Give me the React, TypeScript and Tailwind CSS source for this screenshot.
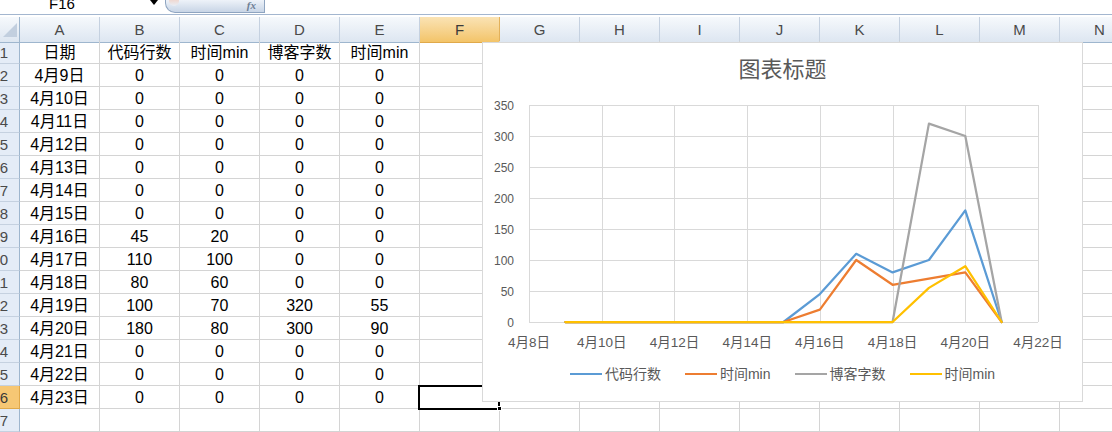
import React from 'react';

const font = { fontFamily: '"Liberation Sans", "Noto Sans CJK SC", sans-serif' };

const columns = ['A', 'B', 'C', 'D', 'E', 'F', 'G', 'H', 'I', 'J', 'K', 'L', 'M', 'N'];

const sheet: string[][] = [
  ['日期', '代码行数', '时间min', '博客字数', '时间min'],
  ['4月9日', '0', '0', '0', '0'],
  ['4月10日', '0', '0', '0', '0'],
  ['4月11日', '0', '0', '0', '0'],
  ['4月12日', '0', '0', '0', '0'],
  ['4月13日', '0', '0', '0', '0'],
  ['4月14日', '0', '0', '0', '0'],
  ['4月15日', '0', '0', '0', '0'],
  ['4月16日', '45', '20', '0', '0'],
  ['4月17日', '110', '100', '0', '0'],
  ['4月18日', '80', '60', '0', '0'],
  ['4月19日', '100', '70', '320', '55'],
  ['4月20日', '180', '80', '300', '90'],
  ['4月21日', '0', '0', '0', '0'],
  ['4月22日', '0', '0', '0', '0'],
  ['4月23日', '0', '0', '0', '0'],
  ['', '', '', '', ''],
];

// chart series, values for 4/9 .. 4/21
const series = [
  { name: '代码行数', color: '#5b9bd5', values: [0, 0, 0, 0, 0, 0, 0, 45, 110, 80, 100, 180, 0] },
  { name: '时间min', color: '#ed7d31', values: [0, 0, 0, 0, 0, 0, 0, 20, 100, 60, 70, 80, 0] },
  { name: '博客字数', color: '#a5a5a5', values: [0, 0, 0, 0, 0, 0, 0, 0, 0, 0, 320, 300, 0] },
  { name: '时间min', color: '#ffc000', values: [0, 0, 0, 0, 0, 0, 0, 0, 0, 0, 55, 90, 0] },
];

const plotLeft = 46;
const plotRight = 555;
const plotTop = 21;
const plotBottom = 238;
const dayW = (plotRight - plotLeft) / 14;
const xOf = (day: number) => plotLeft + (day - 8) * dayW;
const yOf = (v: number) => plotBottom - (v * (plotBottom - plotTop)) / 350;

const Chart: React.FC = () => (
  <div
    className="absolute left-[482px] top-[42px] w-[601px] h-[360px] bg-white border border-[#d9d9d9] z-20 flex flex-col"
    style={font}
  >
    <div className="mt-[13px] h-[28px] leading-[28px] text-center text-[22px] text-[#595959]">图表标题</div>
    <svg width="599" height="280" className="block">
      {[0, 50, 100, 150, 200, 250, 300, 350].map((v) => (
        <g key={v}>
          <line x1={plotLeft} x2={plotRight} y1={yOf(v) + 0.5} y2={yOf(v) + 0.5} stroke="#d9d9d9" strokeWidth="1" />
          <text x="31" y={yOf(v) + 1} textAnchor="end" dominantBaseline="central" fontSize="12" fill="#595959">
            {v}
          </text>
        </g>
      ))}
      {[8, 10, 12, 14, 16, 18, 20, 22].map((d) => (
        <g key={d}>
          <line x1={Math.round(xOf(d)) + 0.5} x2={Math.round(xOf(d)) + 0.5} y1={plotTop} y2={plotBottom} stroke="#d9d9d9" strokeWidth="1" />
          <text x={xOf(d)} y="258" textAnchor="middle" dominantBaseline="central" fontSize="13.5" fill="#595959">
            {`4月${d}日`}
          </text>
        </g>
      ))}
      {series.map((s, i) => (
        <polyline
          key={i}
          fill="none"
          stroke={s.color}
          strokeWidth="2.25"
          strokeLinejoin="round"
          strokeLinecap="round"
          points={s.values.map((v, k) => `${xOf(9 + k)},${yOf(v)}`).join(' ')}
        />
      ))}
    </svg>
    <div className="h-[20px] flex items-center justify-center gap-[24px] text-[14px] text-[#595959]">
      {series.map((s, i) => (
        <div key={i} className="flex items-center gap-[3px]">
          <span className="block w-[32px] h-[2px]" style={{ backgroundColor: s.color }} />
          <span className="leading-[20px]">{s.name}</span>
        </div>
      ))}
    </div>
  </div>
);

const App: React.FC = () => {
  return (
    <div className="relative w-[1112px] h-[432px] overflow-hidden bg-white" style={font}>
      {/* formula bar */}
      <div className="h-[15px] flex items-start border-b border-[#a3b6cf] overflow-hidden">
        <div className="w-[165px] h-[14px] flex items-start">
          <span className="ml-[49px] -mt-[6px] leading-[20px] text-[15px] text-black">F16</span>
          <svg width="8" height="5" className="ml-auto mr-[7px]">
            <polygon points="0,0 8,0 4,5" fill="#000" />
          </svg>
        </div>
        <div className="w-[100px] h-[13px] flex items-start rounded-bl-[10px] border border-t-0 border-[#8ea4c0] bg-gradient-to-b from-[#eef3f9] to-[#c8d5e6]">
          <span className="ml-[3px] -mt-[4px] w-[10px] h-[10px] rounded-full bg-gradient-to-b from-[#f3c9b8] to-[#e8eef6]" />
          <span
            className="ml-auto mr-[8px] -mt-[3px] text-[11px] italic font-bold text-[#6e7f96]"
            style={{ fontFamily: '"Liberation Serif", serif' }}
          >
            fx
          </span>
        </div>
      </div>
      <div className="h-[2px]" />

      {/* column headers */}
      <div className="grid grid-cols-[20px_repeat(14,80px)] h-[24px]">
        <div className="relative border-r border-b border-[#9eb6ce] bg-gradient-to-b from-[#f6f9fc] to-[#dde6f1]">
          <svg width="14" height="14" className="absolute left-[3px] top-[6px]">
            <polygon points="14,0 14,14 0,14" fill="#c2cfdf" />
          </svg>
        </div>
        {columns.map((c) => (
          <div
            key={c}
            className={`flex items-center justify-center pt-[2px] border-r border-b text-[15px] ${
              c === 'F'
                ? 'border-r-[#e3b15a] border-b-[#e0a94a] bg-gradient-to-b from-[#fae3b4] to-[#f3c468] text-[#3a3a3a]'
                : 'border-r-[#c5d1e0] border-b-[#9eb6ce] bg-gradient-to-b from-[#f6f9fc] to-[#dde6f1] text-[#4a4a4a]'
            }`}
          >
            {c}
          </div>
        ))}
      </div>

      {/* rows */}
      <div className="grid grid-cols-[20px_repeat(14,80px)] auto-rows-[23px]">
        {sheet.map((row, r) => (
          <React.Fragment key={r}>
            <div
              className={`flex items-end justify-end pr-[11px] pb-[2px] overflow-hidden whitespace-nowrap border-r border-b text-[15px] leading-[17px] ${
                r === 15
                  ? 'bg-[#f6c774] border-r-[#e0a94a] border-b-[#e0a94a] text-[#3a3a3a]'
                  : 'bg-[#e4ecf7] border-r-[#9eb6ce] border-b-[#c5d1e0] text-[#4a4a4a]'
              }`}
            >
              {r + 1}
            </div>
            {columns.map((c, ci) => (
              <div
                key={c}
                className="flex items-end justify-center pb-[1px] border-r border-b border-[#d4d4d4] text-[16px] leading-[18px] text-black whitespace-nowrap"
              >
                {ci < 5 ? row[ci] : ''}
              </div>
            ))}
          </React.Fragment>
        ))}
      </div>

      {/* active cell F16 */}
      <div className="absolute left-[418px] top-[385px] w-[82px] h-[25px] border-2 border-black z-10" />
      <div className="absolute left-[497px] top-[406px] w-[5px] h-[5px] bg-black border border-white z-10" />

      <Chart />
    </div>
  );
};

export default App;
